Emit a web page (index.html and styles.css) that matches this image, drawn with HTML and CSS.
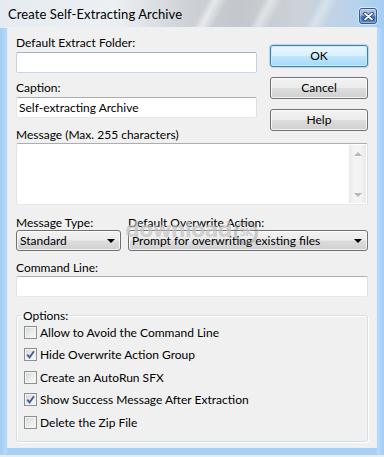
FILE: index.html
```html
<!DOCTYPE html>
<html lang="en">
<head>
    <meta charset="UTF-8">
    <title>Create Self-Extracting Archive</title>
    <link rel="stylesheet" href="styles.css">
</head>
<body>
    <div class="window">
        <div class="titlebar">
            <span class="title">Create Self-Extracting Archive</span>
            <span class="close">
                <svg width="11" height="9" viewBox="0 0 11 9">
                    <path d="M2 1.5 L9 7.5 M9 1.5 L2 7.5" stroke="#1d3763" stroke-width="3.4" stroke-linecap="round"/>
                    <path d="M2 1.5 L9 7.5 M9 1.5 L2 7.5" stroke="#fff" stroke-width="1.8" stroke-linecap="round"/>
                </svg>
            </span>
        </div>

        <div class="client">
            <div class="top">
                <div class="fields">
                    <div class="lbl">Default Extract Folder:</div>
                    <div class="edit focus"></div>
                    <div class="lbl caption">Caption:</div>
                    <div class="edit">Self-extracting Archive</div>
                </div>
                <div class="buttons">
                    <div class="btn default">OK</div>
                    <div class="btn">Cancel</div>
                    <div class="btn">Help</div>
                </div>
            </div>

            <div class="lbl msg">Message (Max. 255 characters)</div>
            <div class="memo">
                <div class="vscroll">
                    <span class="arrow up"></span>
                    <span class="arrow down"></span>
                </div>
            </div>

            <div class="combos">
                <div class="combo-col">
                    <div class="lbl">Message Type:</div>
                    <div class="combo">Standard<span class="caret"></span></div>
                </div>
                <div class="combo-col">
                    <div class="lbl">Default Overwrite Action:</div>
                    <div class="combo">Prompt for overwriting existing files<span class="caret"></span></div>
                </div>
                <div class="watermark">download<span class="badge">3K</span></div>
            </div>

            <div class="lbl cmd">Command Line:</div>
            <div class="edit wide"></div>

            <fieldset class="group">
                <legend>Options:</legend>
                <div class="check"><span class="box"></span>Allow to Avoid the Command Line</div>
                <div class="check"><span class="box on"><svg width="11" height="11" viewBox="0 0 11 11"><path d="M2.2 5.6 L4.6 8.4 L9 2.2" fill="none" stroke="#4a5e9c" stroke-width="1.9"/></svg></span>Hide Overwrite Action Group</div>
                <div class="check"><span class="box"></span>Create an AutoRun SFX</div>
                <div class="check"><span class="box on"><svg width="11" height="11" viewBox="0 0 11 11"><path d="M2.2 5.6 L4.6 8.4 L9 2.2" fill="none" stroke="#4a5e9c" stroke-width="1.9"/></svg></span>Show Success Message After Extraction</div>
                <div class="check"><span class="box"></span>Delete the Zip File</div>
            </fieldset>
        </div>
    </div>
</body>
</html>
```

FILE: styles.css
```css
* { margin: 0; padding: 0; box-sizing: border-box }
body { width: 384px; height: 457px; overflow: hidden; background: #fff;
    font-family: Lato, "Liberation Sans", sans-serif; font-size: 12px; color: #000 }

/* window frame */
.window { width: 384px; height: 457px; display: flex; flex-direction: column;
    background: linear-gradient(to right, #a2cdf6 0, #b6d9f8 6px, #a6d0f6 8px, #a6d0f6 376px, #b8daf8 378px, #a2cdf6 384px);
    border-bottom: 2px solid #e8eef4 }

.titlebar { height: 28px; display: flex; align-items: flex-start; justify-content: space-between;
    background:
        linear-gradient(118deg, transparent 0 52%, rgba(255,255,255,.55) 54%, transparent 57% 66%, rgba(255,255,255,.45) 68%, transparent 71% 80%, rgba(255,255,255,.35) 82%, transparent 85%),
        linear-gradient(to right, #e6ebf1 0%, #ecf0f3 30%, #cfd3d8 48%, #c3c7cc 62%, #cdd2d8 78%, #b9d3ec 92%, #a6cdf3 100%) }
.title { font-size: 13px; padding: 6px 0 0 8px; color: #000; letter-spacing: .1px }
.close { width: 18px; height: 16px; margin: 8px 7px 0 0; border-radius: 3px;
    border: 1px solid #35588f; display: flex; align-items: center; justify-content: center;
    background: linear-gradient(#b5cdef 0, #7fa3da 45%, #3f6bb6 55%, #5a8ad0 100%);
    box-shadow: inset 0 0 0 1px rgba(255,255,255,.35), 0 0 0 1px rgba(255,255,255,.5) }

.client { flex: 1; margin: 0 8px 8px 8px; background: #f0f0f0; padding: 7px 8px 0 8px;
    box-shadow: 0 0 0 1px #e6f1fb }

.lbl { line-height: 15px; height: 15px; white-space: nowrap }

/* top part: two fields + buttons */
.top { display: flex; gap: 13px; align-items: flex-start }
.fields { width: 241px }
.edit { height: 21px; margin-top: 2px; background: #fff; border: 1px solid;
    border-color: #abadb3 #dbdfe6 #e3e9ef #e2e3ea; border-radius: 2px;
    padding-left: 2px; line-height: 19px; white-space: nowrap }
.edit.focus { border-color: #9fb4cc #bfd0e2 #c9d8e8 #bfd0e2 }
.lbl.caption { margin-top: 7px }

.buttons { width: 98px; padding-top: 10px; margin-bottom: -13px; display: flex; flex-direction: column; gap: 10px }
.btn { height: 22px; border: 1px solid #707070; border-radius: 3px; text-align: center; line-height: 20px;
    background: linear-gradient(#f2f2f2 0, #ebebeb 48%, #dddddd 52%, #cfcfcf 100%);
    box-shadow: inset 0 0 0 1px rgba(255,255,255,.75) }
.btn.default { border-color: #3c7fb1;
    background: linear-gradient(#eaf6fd 0, #d9f0fc 48%, #bee6fd 52%, #a7d9f5 100%);
    box-shadow: inset 0 0 0 1px #c8ebfd, 0 0 1px 1px rgba(92,170,220,.35) }

/* message box */
.lbl.msg { margin-top: 9px }
.memo { height: 62px; margin-top: 1px; background: #fff; border: 1px solid;
    border-color: #abadb3 #dbdfe6 #e3e9ef #e2e3ea; border-radius: 2px;
    display: flex; justify-content: flex-end; padding: 1px }
.vscroll { width: 17px; display: flex; flex-direction: column; justify-content: space-between; align-items: center;
    background: linear-gradient(to right, #e8e8e8, #f4f4f4 30%, #f4f4f4 70%, #e8e8e8);
    padding: 7px 0 6px 0 }
.arrow { width: 0; height: 0; border-left: 4px solid transparent; border-right: 4px solid transparent }
.arrow.up { border-bottom: 4px solid #b8b8b8 }
.arrow.down { border-top: 4px solid #b8b8b8 }

/* dropdowns */
.combos { position: relative; display: grid; grid-template-columns: 105px 240px; gap: 7px; margin-top: 10px }
.combo { height: 21px; margin-top: 0; border: 1px solid #707070; border-radius: 3px; position: relative;
    padding-left: 3px; line-height: 19px; white-space: nowrap;
    background: linear-gradient(#f2f2f2 0, #ebebeb 48%, #dddddd 52%, #cfcfcf 100%);
    box-shadow: inset 0 0 0 1px rgba(255,255,255,.75) }
.caret { position: absolute; right: 5px; top: 8px; width: 0; height: 0;
    border-left: 4px solid transparent; border-right: 4px solid transparent; border-top: 4px solid #000 }

.watermark { position: absolute; left: 109px; top: 3px; font-family: "DejaVu Sans", sans-serif; font-weight: bold;
    font-size: 21px; letter-spacing: -1px; color: rgba(120,120,120,.33); pointer-events: none;
    text-shadow: 0 0 1px rgba(255,255,255,.6) }
.badge { display: inline-block; margin-left: 2px; width: 24px; height: 24px; border-radius: 50%;
    border: 3px solid rgba(120,120,120,.33); font-size: 10px; line-height: 18px; text-align: center; vertical-align: 1px }

.lbl.cmd { margin-top: 9px }
.edit.wide { margin-top: 1px }

/* options group */
.group { margin-top: 11px; border: 1px solid #d5dfe5; border-radius: 3px; padding: 0 7px 7px 7px;
    box-shadow: inset 1px 1px 0 #fff, 1px 1px 0 #fff }
.group legend { line-height: 15px; padding: 0 1px; margin-left: -2px; margin-bottom: -2px }
.check { height: 22.5px; display: flex; align-items: center; white-space: nowrap }
.box { width: 13px; height: 13px; margin-right: 3px; border: 1px solid #8e8f8f; display: flex;
    align-items: center; justify-content: center;
    background: linear-gradient(135deg, #d2d5d9 0, #eeeeee 60%, #f8f8f8 100%);
    box-shadow: inset 0 0 0 1px #f4f4f4 }
```
